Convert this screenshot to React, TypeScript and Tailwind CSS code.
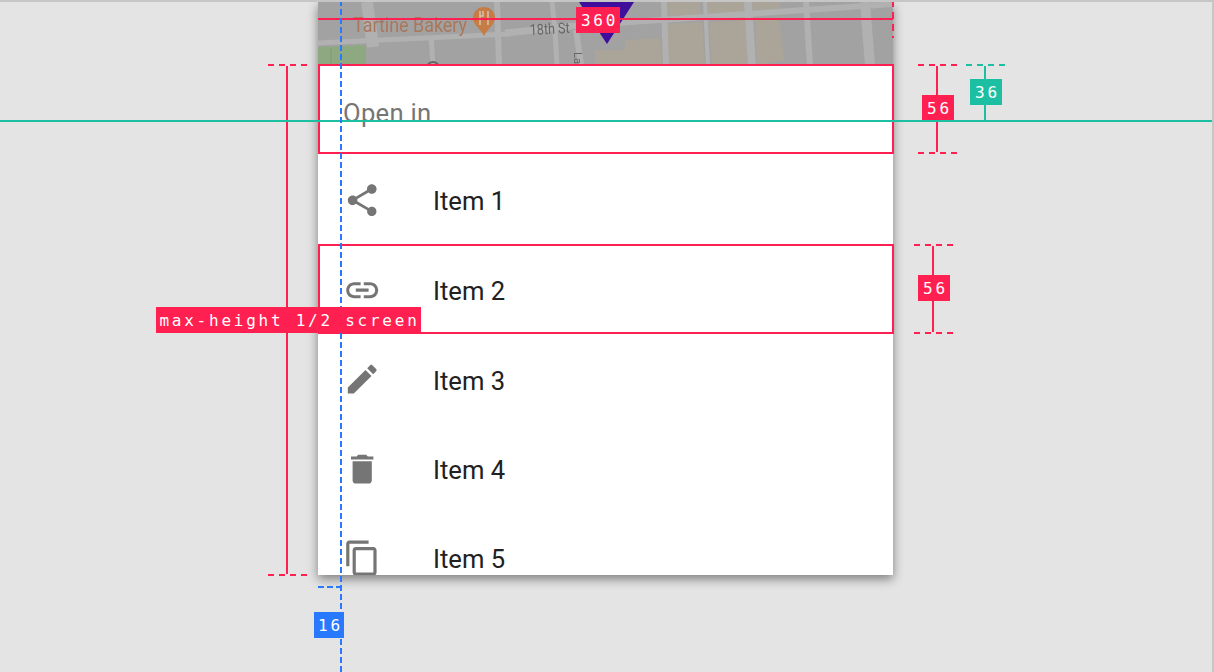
const items = [
  { label: 'Item 1', d: 'M18 16.08c-.76 0-1.44.3-1.96.77L8.91 12.7c.05-.23.09-.46.09-.7s-.04-.47-.09-.7l7.05-4.11c.54.5 1.25.81 2.04.81 1.66 0 3-1.34 3-3s-1.34-3-3-3-3 1.34-3 3c0 .24.04.47.09.7L8.04 9.81C7.5 9.31 6.79 9 6 9c-1.66 0-3 1.34-3 3s1.34 3 3 3c.79 0 1.5-.31 2.04-.81l7.12 4.16c-.05.21-.08.43-.08.65 0 1.61 1.31 2.92 2.92 2.92 1.61 0 2.92-1.31 2.92-2.92s-1.31-2.92-2.92-2.92z' },
  { label: 'Item 2', d: 'M3.9 12c0-1.71 1.39-3.1 3.1-3.1h4V7H7c-2.76 0-5 2.24-5 5s2.24 5 5 5h4v-1.9H7c-1.71 0-3.1-1.39-3.1-3.1zM8 13h8v-2H8v2zm9-6h-4v1.9h4c1.71 0 3.1 1.39 3.1 3.1s-1.39 3.1-3.1 3.1h-4V17h4c2.76 0 5-2.24 5-5s-2.24-5-5-5z' },
  { label: 'Item 3', d: 'M3 17.25V21h3.75L17.81 9.94l-3.75-3.75L3 17.25zM20.71 7.04c.39-.39.39-1.02 0-1.41l-2.34-2.34c-.39-.39-1.02-.39-1.41 0l-1.83 1.83 3.75 3.75 1.83-1.83z' },
  { label: 'Item 4', d: 'M6 19c0 1.1.9 2 2 2h8c1.1 0 2-.9 2-2V7H6v12zM19 4h-3.5l-1-1h-5l-1 1H5v2h14V4z' },
  { label: 'Item 5', d: 'M16 1H4c-1.1 0-2 .9-2 2v14h2V3h12V1zm3 4H8c-1.1 0-2 .9-2 2v14c0 1.1.9 2 2 2h11c1.1 0 2-.9 2-2V7c0-1.1-.9-2-2-2zm0 16H8V7h11v14z' },
];

const red = 'bg-[#ff1f50]';
const teal = 'bg-[#1dbfa3]';
const redDash = 'h-[2px] w-full bg-[repeating-linear-gradient(90deg,#ff1f50_0_6px,transparent_6px_11px)]';
const tealDash = 'h-[2px] w-full bg-[repeating-linear-gradient(90deg,#1dbfa3_0_6px,transparent_6px_11px)]';

// map drawn in page coordinates, so the viewBox starts at the sheet's corner
const MapPreview = () => (
  <svg className="block w-[575px] h-[62px] blur-[0.6px]" viewBox="318 2 575 62">
    <rect x="318" y="0" width="575" height="65" fill="#a2a2a2" />
    <polygon points="318,47 366,45 366,65 318,65" fill="#8ea881" />
    <line x1="331" y1="48" x2="331" y2="65" stroke="#809b74" strokeWidth="1" />
    <polygon points="595,50 625,50 625,65 595,65" fill="#aaa598" />
    <polygon points="625,40 660,38 662,65 625,65" fill="#aaa598" />
    <polygon points="668,24 702,22 705,65 668,65" fill="#aaa598" />
    <polygon points="709,22 745,20 748,65 712,65" fill="#aaa598" />
    <polygon points="755,20 778,18 781,32 784,60 757,65" fill="#aaa598" />
    <polygon points="707,2 744,2 745,12 708,13" fill="#aaa598" />
    <polygon points="752,2 780,2 780,9 753,10" fill="#aaa598" />
    <polygon points="668,2 700,2 700,15 669,16" fill="#aaa598" />
    <g fill="none" stroke="#b1b1b1">
      <line x1="318" y1="43" x2="510" y2="34" strokeWidth="5" />
      <line x1="505" y1="33" x2="572" y2="26" strokeWidth="7" />
      <line x1="572" y1="26" x2="893" y2="4" strokeWidth="6" />
      <line x1="367" y1="2" x2="373" y2="47" strokeWidth="12" />
      <line x1="431" y1="36" x2="433" y2="65" strokeWidth="5" />
      <line x1="497" y1="2" x2="499" y2="65" strokeWidth="6" />
      <polyline points="552,2 555,30 557,65" strokeWidth="5" />
      <line x1="576" y1="30" x2="581" y2="65" strokeWidth="6" />
      <line x1="664" y1="2" x2="666" y2="65" strokeWidth="6" />
      <line x1="705" y1="2" x2="708" y2="65" strokeWidth="4" />
      <line x1="748" y1="2" x2="752" y2="65" strokeWidth="8" />
      <line x1="806" y1="2" x2="810" y2="65" strokeWidth="6" />
      <line x1="865" y1="2" x2="870" y2="65" strokeWidth="10" />
    </g>
    <text x="353" y="32" fontFamily="Roboto, sans-serif" fontSize="20" fill="#a9775c" textLength="114" lengthAdjust="spacingAndGlyphs">Tartine Bakery</text>
    <path d="M484 7a11 11 0 0 1 11 11c0 7-8 11-11 18c-3-7-11-11-11-18a11 11 0 0 1 11-11z" fill="#c57c45" />
    <path d="M480 11v14M483 11v5h-3M488 11v14" stroke="#d8c0a8" strokeWidth="1.6" fill="none" />
    <text x="530" y="35" fontFamily="Roboto, sans-serif" fontSize="15" fill="#666666" textLength="40" lengthAdjust="spacingAndGlyphs" transform="rotate(-3 530 35)">18th St</text>
    <text x="0" y="0" fontFamily="Roboto, sans-serif" fontSize="11" fill="#666666" transform="translate(574 52) rotate(90)">La</text>
    <circle cx="433" cy="68" r="6" fill="none" stroke="#666666" strokeWidth="2" />
    <polygon points="579,2 634,2 607,44" fill="#3f0f9c" />
  </svg>
);

const Tag = ({ className, children }: { className: string, children: string }) => (
  <div className={`h-[26px] shrink-0 flex items-center justify-center pt-[2px] pl-[3px] text-white text-[16px] tracking-[2.75px] whitespace-pre font-['DejaVu_Sans_Mono',monospace] ${className}`}>
    {children}
  </div>
);

// red dimension marker: dash, line, label, line, dash
const Measure = ({ label, height, before, labelClass }: { label: string, height: string, before: string, labelClass: string }) => (
  <div className={`flex flex-col items-center w-[40px] ${height}`}>
    <div className={redDash} />
    <div className={`w-[2px] mr-[2px] ${before} ${red}`} />
    <Tag className={`${labelClass} ${red}`}>{label}</Tag>
    <div className={`w-[2px] mr-[2px] flex-1 ${red}`} />
    <div className={redDash} />
  </div>
);

export default function App() {
  return (
    <div className="relative w-[1214px] h-[672px] overflow-hidden flex bg-[#e4e4e4] border-t-2 border-r-2 border-[#c6c6c6] font-['Roboto',sans-serif]">
      {/* left gutter */}
      <div className="w-[318px] shrink-0 pt-[62px] pl-[268px]">
        <Measure label="max-height 1/2 screen" height="h-[512px]" before="h-[241px]" labelClass="w-[265px] relative z-10" />
      </div>

      {/* sheet and its margin marker */}
      <div className="w-[575px] shrink-0 flex flex-col">
        <div className="h-[573px] shrink-0 flex flex-col bg-white shadow-[0_4px_10px_rgba(0,0,0,0.45)]">
          <div className="relative h-[62px] shrink-0">
            <MapPreview />
            <div className="absolute inset-x-0 top-[5px] flex items-center">
              <div className={`w-[258px] h-[2px] mb-[2px] ${red}`} />
              <Tag className={`w-[44px] ${red}`}>360</Tag>
              <div className={`flex-1 h-[2px] mb-[2px] ${red}`} />
            </div>
            <div className="absolute -right-px -top-[2px] h-[38px] w-[2px] bg-[repeating-linear-gradient(180deg,#ff1f50_0_7px,transparent_7px_12px)]" />
          </div>
          <div className="h-[90px] shrink-0 -mr-px border-2 border-[#ff1f50] flex items-center pl-[23px] pt-[8px] text-[25.6px] tracking-[0.3px] text-[#757575]">Open in</div>
          <div className="flex-1 min-h-0 overflow-y-clip">
            {items.map((item, i) => (
              <div key={item.label} className={`shrink-0 flex items-center pt-[5px] ${i < 2 ? 'h-[90px]' : 'h-[89.25px]'} ${i === 1 ? '-mr-px border-2 border-[#ff1f50] pl-[23px]' : 'pl-[25px]'}`}>
                <svg className="w-[38.4px] h-[38.4px] shrink-0 -mt-[3px]" viewBox="0 0 24 24" fill="#757575">
                  <path d={item.d} />
                </svg>
                <span className="ml-[51.6px] text-[25.6px] text-[#212121]">{item.label}</span>
              </div>
            ))}
          </div>
        </div>
        <div className="mt-[11px] h-[2px] w-[23px] bg-[repeating-linear-gradient(90deg,#2979ff_0_6px,transparent_6px_9px)]" />
        <Tag className="mt-[24px] -ml-[4px] w-[30px] bg-[#2979ff]">16</Tag>
      </div>

      {/* right gutter */}
      <div className="pt-[62px] pl-[25px] flex flex-col">
        <div className="flex gap-[8px] items-start">
          <Measure label="56" height="h-[90px]" before="h-[29px]" labelClass="w-[32px]" />
          <div className="flex flex-col items-center w-[40px]">
            <div className={tealDash} />
            <div className={`w-[2px] mr-[2px] h-[13px] ${teal}`} />
            <Tag className={`w-[32px] ${teal}`}>36</Tag>
            <div className={`w-[2px] mr-[2px] h-[16px] ${teal}`} />
          </div>
        </div>
        <div className="mt-[90px] -ml-[4px]">
          <Measure label="56" height="h-[90px]" before="h-[29px]" labelClass="w-[32px]" />
        </div>
      </div>

      {/* keylines over everything */}
      <div className={`absolute inset-x-0 top-[118px] h-[2px] ${teal}`} />
      <div className="absolute left-[340px] -top-[2px] bottom-0 w-[2px] bg-[repeating-linear-gradient(180deg,#2979ff_0_6px,transparent_6px_9px)]" />
    </div>
  );
}
